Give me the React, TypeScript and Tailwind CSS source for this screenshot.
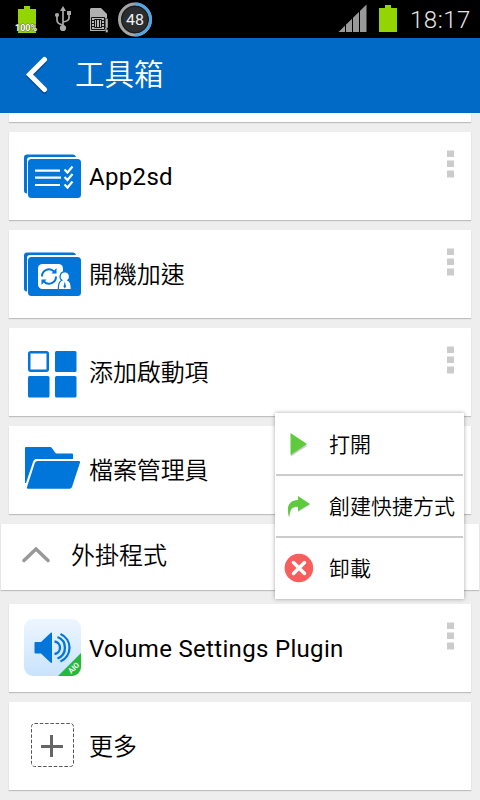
import type { ReactNode } from 'react';

const BLUE = '#0075da';

function StatusBar() {
  return (
    <div className="flex h-[38px] shrink-0 items-start bg-black">
      <svg className="h-[38px] w-[160px]" viewBox="0 0 160 38">
        <path d="M18 9h6V6h6v3h6v24H18z" fill="#93d500" />
        <text
          x="26"
          y="31"
          textAnchor="middle"
          fontSize="9.500"
          fontWeight="700"
          fill="#fff"
          stroke="#333"
          strokeOpacity="0.7"
          strokeWidth="1"
          paintOrder="stroke"
          textLength="22"
          lengthAdjust="spacingAndGlyphs"
        >
          100%
        </text>

        <g fill="none" stroke="#aaa" strokeWidth="1.7">
          <path d="M63 28V10M63 25q-6-1-6-5v-5M63 22q6-1 6-4v-5" />
        </g>
        <g fill="#aaa">
          <path d="M60 11l3-5 3 5z" />
          <circle cx="63" cy="28" r="3.1" />
          <circle cx="57" cy="15" r="2.1" />
          <path d="M67 11h4v4h-4z" />
        </g>

        <path d="M90 9l1-1h10l6 6v17H90z" fill="#b0b0b0" />
        <path d="M91.500 17.500h13v12h-13z" fill="#b8b8b8" stroke="#111" strokeWidth="1" />
        <path
          d="M94.500 19.500h7v8h-7zM92 20.500h2M92 23.500h2M92 26.500h2M102 20.500h2M102 23.500h2M102 26.500h2M96.500 20v7M99.500 20v7"
          fill="none"
          stroke="#111"
          strokeWidth="1"
        />
        <path d="M105.500 18.500h2.500v9.500h-2.500zM105.500 29.500h2.500v3h-2.500z" fill="#b8b8b8" stroke="#111" strokeWidth="0.5" />

        <circle cx="135" cy="19.500" r="15.500" fill="#2b2d2f" stroke="#a5a5a5" strokeWidth="3" />
        <path d="M135 4a15.500 15.500 0 0 1 0 31" fill="none" stroke="#51a7e3" strokeWidth="3" />
        <circle cx="135" cy="19.500" r="13.300" fill="none" stroke="#17191a" strokeWidth="1" />
        <text x="135" y="24.500" textAnchor="middle" fontSize="15" fill="#f0f0f0" textLength="18" lengthAdjust="spacingAndGlyphs">
          48
        </text>
      </svg>

      <svg className="ml-auto h-[38px] w-[90px]" viewBox="320 0 90 38">
        <path d="M338.500 32L366.500 4.500V32z" fill="#999" />
        <path d="M345.500 4v29M352.500 4v29M359.500 4v29" stroke="#000" strokeWidth="1" />
        <path d="M379 8h6V5h6v3h6v24h-18z" fill="#93d500" />
      </svg>
      <span className="w-[70px] whitespace-nowrap pt-[6px] text-2xl leading-7 font-light tracking-[0.5px] text-[#e6e6e6]">
        18:17
      </span>
    </div>
  );
}

function Header() {
  return (
    <header className="flex h-[75px] shrink-0 items-center bg-[#006ac6] text-white">
      <svg className="ml-[24px] h-[40px] w-[26px]" viewBox="24 56 26 40">
        <path
          d="M44.500 60.500L29.500 75.500L44.500 90.500"
          transform="translate(0 1)"
          fill="none"
          stroke="#004f9c"
          strokeWidth="5"
          strokeLinecap="round"
        />
        <path
          d="M44.500 59.500L29.500 74.500L44.500 89.500"
          fill="none"
          stroke="#fff"
          strokeWidth="5"
          strokeLinecap="round"
        />
      </svg>
      <h1 className="ml-[25px] pt-px text-[29.500px] leading-none font-[350]">工具箱</h1>
    </header>
  );
}

function StackedCards() {
  return (
    <>
      <path d="M0 10.500a3 3 0 0 1 3-3h46a3 3 0 0 1 3 2.500H6a3 3 0 0 0-3 3v33.500a3 3 0 0 1-3-3z" fill={BLUE} />
      <rect x="4" y="12" width="53" height="39" rx="3.500" fill={BLUE} />
    </>
  );
}

function ListIcon() {
  return (
    <svg className="h-[57px] w-[57px]" viewBox="0 0 57 57">
      <StackedCards />
      <g fill="none" stroke="#fff" strokeWidth="2.200">
        <path d="M11 23.700h25M11 30.600h26M11 38h25" />
        <path d="M40.500 22.500l3 3 5-6M40.500 30l3 3 5-6M40.500 37.500l3 3 5-6" />
      </g>
    </svg>
  );
}

function BootIcon() {
  return (
    <svg className="h-[57px] w-[57px]" viewBox="0 0 57 57">
      <StackedCards />
      <rect x="14" y="19" width="25" height="25" rx="4.500" fill="#fff" />
      <g fill="none" stroke={BLUE} strokeWidth="2">
        <path d="M18 31.500a7 7 0 0 1 12-5" />
        <path d="M32 31.500a7 7 0 0 1-12 5" />
      </g>
      <path d="M27.500 28.500h5v-5.500zM22.500 34.500h-5V40z" fill={BLUE} />
      <path
        d="M40.800 26.700a4.800 4.800 0 0 1 3 8.500c2.300.8 3.500 3.500 3.500 9.300H34.300c0-5.800 1.200-8.500 3.500-9.300a4.800 4.800 0 0 1 3-8.500z"
        fill="#fff"
        stroke={BLUE}
        strokeWidth="1.200"
      />
      <path d="M40.800 36.500l1.200 5-1.200 2-1.200-2z" fill={BLUE} />
    </svg>
  );
}

function GridIcon() {
  return (
    <svg className="h-[57px] w-[57px]" viewBox="0 0 57 57">
      <g fill={BLUE}>
        <rect x="31" y="8" width="21.500" height="21" rx="1.500" />
        <rect x="4" y="33" width="21.500" height="21.500" rx="1.500" />
        <rect x="31" y="33" width="21.500" height="21.500" rx="1.500" />
      </g>
      <rect x="5.250" y="9.250" width="18.500" height="18.500" rx="1.500" fill="#fff" stroke={BLUE} strokeWidth="2.500" />
    </svg>
  );
}

function FolderIcon() {
  return (
    <svg className="h-[57px] w-[57px]" viewBox="0 0 57 57">
      <g fill={BLUE}>
        <path d="M1 7a1 1 0 0 1 1-1h24.500c1.500 0 4.500 6.500 6 6.500H48a1 1 0 0 1 1 1V18H13c-2 0-3 .5-4 3L2 42H1z" />
        <path d="M11 21.500q.600-1.500 2.500-1.500H55q1.500 0 1 1.500l-8 24.500q-.600 1.700-2.500 1.700H4q-1.700 0-1-1.700z" />
      </g>
    </svg>
  );
}

function VolumeIcon() {
  return (
    <svg className="h-[57px] w-[57px]" viewBox="0 0 57 57">
      <defs>
        <linearGradient id="tile" x1="0" y1="0" x2="0" y2="1">
          <stop offset="0" stopColor="#edf6ff" />
          <stop offset="1" stopColor="#c9e3fc" />
        </linearGradient>
        <clipPath id="tile-clip">
          <rect width="57" height="57" rx="9" />
        </clipPath>
      </defs>
      <g clipPath="url(#tile-clip)">
        <rect width="57" height="57" fill="url(#tile)" />
        <path d="M57 34V57H34z" fill="#24b83c" />
        <text
          transform="translate(49.800 49) rotate(-45)"
          y="2.500"
          textAnchor="middle"
          fontSize="7.500"
          fontWeight="700"
          fill="#fff"
          textLength="12"
          lengthAdjust="spacingAndGlyphs"
        >
          AIO
        </text>
      </g>
      <path d="M10.500 24a1 1 0 0 1 1-1H17l9.500-9c.8-.7 1.500-.5 1.500.5V43c0 1-.7 1.200-1.500.5L17 34.500h-5.500a1 1 0 0 1-1-1z" fill={BLUE} />
      <g fill="none" stroke={BLUE} strokeWidth="2.300">
        <path d="M30.500 22.500a6.300 6.300 0 0 1 0 12.500" />
        <path d="M33.500 18a11.500 11.500 0 0 1 0 21.500" />
        <path d="M36.500 15a15 15 0 0 1 0 27.500" />
      </g>
    </svg>
  );
}

function MoreIcon() {
  return (
    <svg className="h-[57px] w-[57px]" viewBox="0 0 57 57">
      <rect x="7.500" y="6.500" width="42" height="43" rx="3" fill="none" stroke="#555" strokeDasharray="3.500 1.800" />
      <path d="M17 29.500h22M27.500 18v22" stroke="#666" strokeWidth="3" />
    </svg>
  );
}

function MoreDots() {
  return (
    <svg className="mt-[18px] mr-[17px] h-[28px] w-[7px]" viewBox="0 0 7 28">
      <path d="M0 .600h7V7H0zM0 10.600h7V17H0zM0 20.600h7V27.400H0z" fill="#ccc" />
    </svg>
  );
}

type CardProps = {
  label: string;
  icon: ReactNode;
  menu?: boolean;
};

function Card({ label, icon, menu = true }: CardProps) {
  return (
    <div className="mx-[9px] flex h-[88px] shrink-0 bg-white shadow-[0_1px_1px_#bfbfbf]">
      <div className="flex flex-1 items-center pl-[15px]">
        <div className="pb-px">{icon}</div>
        <Label text={label} />
      </div>
      {menu && <MoreDots />}
    </div>
  );
}

function Label({ text }: { text: string }) {
  const latin = /^[\x20-\x7e]+$/.test(text);
  return (
    <span
      className={
        latin
          ? 'ml-[8px] pt-[2px] text-2xl leading-8 tracking-[0.32px] whitespace-nowrap'
          : 'ml-[8px] pt-[2px] text-2xl leading-8 font-[350] tracking-[-0.1px] whitespace-nowrap'
      }
    >
      {text}
    </span>
  );
}

function SectionHeader() {
  return (
    <div className="mx-px mt-[10px] mb-[14px] flex h-[66px] shrink-0 items-center bg-white shadow-[0_1px_1px_#bfbfbf]">
      <svg className="ml-[20px] h-[20px] w-[30px]" viewBox="0 0 30 20">
        <path d="M3 13.500L15 2L27 13.500" fill="none" stroke="#999" strokeWidth="3.500" strokeLinecap="round" />
      </svg>
      <span className="ml-[20px] pb-[3px] text-2xl leading-8 font-[350]">外掛程式</span>
    </div>
  );
}

function ContextMenu() {
  return (
    <div className="absolute top-[413px] left-[275px] flex h-[186px] w-[189px] flex-col bg-white px-px text-[21px] font-[350] shadow-[0_0_4px_rgba(0,0,0,0.35)]">
      <div className="flex h-[61px] items-center">
        <svg className="ml-[8px] size-[30px]" viewBox="284 429 30 30">
          <path d="M291 434.500l16 11.500-16 10.500z" fill="#ccc" />
          <path d="M290.500 433L307 444L290.500 455z" fill="#5fca3e" />
        </svg>
        <span className="ml-[15px] pt-[2px] leading-7">打開</span>
      </div>
      <div className="h-[2px] bg-[#ccc]" />
      <div className="flex h-[60px] items-center">
        <svg className="ml-[8px] size-[30px]" viewBox="284 491 30 30">
          <path
            d="M298 496.500L310 504.500L298 512V507.500C292 506.500 290 510 289.500 518C286 508 289 500.500 298 500.500z"
            fill="#ccc"
          />
          <path
            d="M298 496L310 504L298 511V507C292 506 290 509 289 517C286 507 289 500 298 500z"
            fill="#5fca3e"
          />
        </svg>
        <span className="ml-[15px] pt-[2px] whitespace-nowrap leading-7">創建快捷方式</span>
      </div>
      <div className="h-[2px] bg-[#ccc]" />
      <div className="flex h-[60px] items-center">
        <svg className="ml-[8px] size-[30px]" viewBox="0 0 30 30">
          <circle cx="14.900" cy="15" r="14.300" fill="#f95e5e" />
          <path d="M9.500 9.500l11 11M20.500 9.500l-11 11" stroke="#fff" strokeWidth="3.500" strokeLinecap="round" />
        </svg>
        <span className="ml-[15px] pt-[2px] leading-7">卸載</span>
      </div>
    </div>
  );
}

export default function App() {
  return (
    <div className="relative flex h-[800px] w-[480px] flex-col overflow-hidden bg-[#eee] font-['Roboto','Noto_Sans_CJK_TC',sans-serif] text-black">
      <StatusBar />
      <Header />
      <div className="mx-[9px] mb-[10px] h-[9px] shrink-0 bg-white shadow-[0_1px_1px_#bfbfbf]" />
      <div className="flex shrink-0 flex-col gap-[10px]">
        <Card label="App2sd" icon={<ListIcon />} />
        <Card label="開機加速" icon={<BootIcon />} />
        <Card label="添加啟動項" icon={<GridIcon />} />
        <Card label="檔案管理員" icon={<FolderIcon />} />
      </div>
      <SectionHeader />
      <div className="flex shrink-0 flex-col gap-[10px]">
        <Card label="Volume Settings Plugin" icon={<VolumeIcon />} />
        <Card label="更多" icon={<MoreIcon />} menu={false} />
      </div>
      <ContextMenu />
    </div>
  );
}
